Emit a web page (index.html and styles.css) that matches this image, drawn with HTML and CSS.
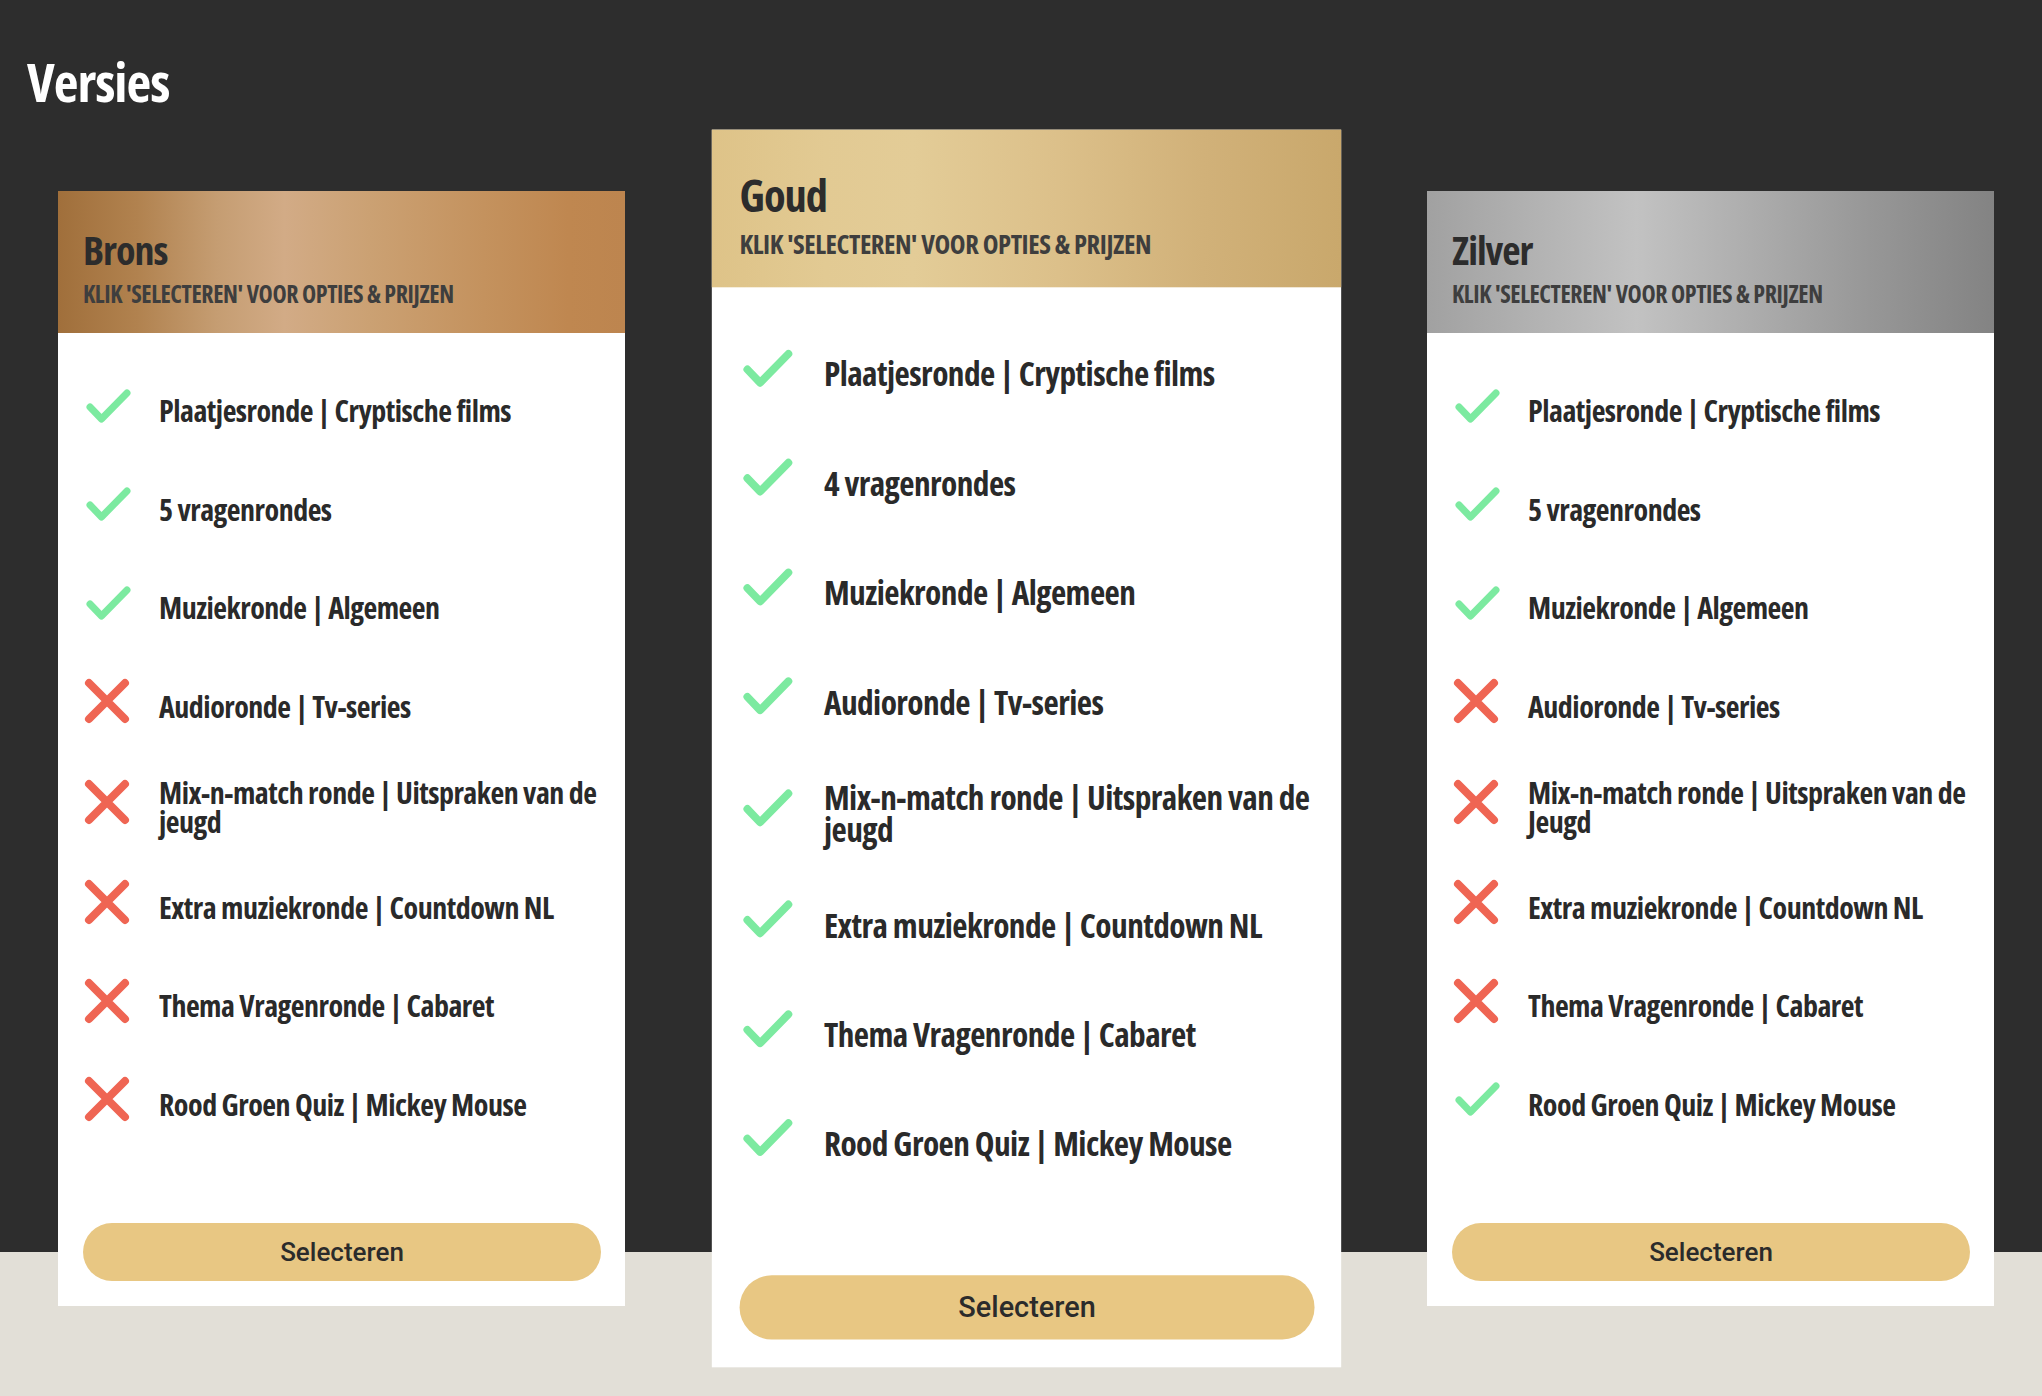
FILE: index.html
```html
<!DOCTYPE html>
<html lang="nl">
<head>
<meta charset="utf-8">
<title>Versies</title>
<link rel="stylesheet" href="styles.css">
</head>
<body>
<main class="page">
  <h1 class="page-title">Versies</h1>
  <div class="plans">
    <article class="plan plan--brons">
      <header class="plan-head">
        <h2 class="plan-name">Brons</h2>
        <p class="plan-sub">KLIK 'SELECTEREN' VOOR OPTIES &amp; PRIJZEN</p>
      </header>
      <div class="plan-body">
        <ul class="features">
          <li class="feature"><span class="feature-icon"><svg viewBox="0 0 46 44"><polyline class="ic-yes" points="5,23 16.5,35 42,9"/></svg></span><span class="feature-text">Plaatjesronde | Cryptische films</span></li>
          <li class="feature"><span class="feature-icon"><svg viewBox="0 0 46 44"><polyline class="ic-yes" points="5,23 16.5,35 42,9"/></svg></span><span class="feature-text">5 vragenrondes</span></li>
          <li class="feature"><span class="feature-icon"><svg viewBox="0 0 46 44"><polyline class="ic-yes" points="5,23 16.5,35 42,9"/></svg></span><span class="feature-text">Muziekronde | Algemeen</span></li>
          <li class="feature"><span class="feature-icon"><svg viewBox="0 0 46 44"><path class="ic-no" d="M4 4L40 40M40 4L4 40"/></svg></span><span class="feature-text">Audioronde | Tv-series</span></li>
          <li class="feature"><span class="feature-icon"><svg viewBox="0 0 46 44"><path class="ic-no" d="M4 4L40 40M40 4L4 40"/></svg></span><span class="feature-text">Mix-n-match ronde | Uitspraken van de jeugd</span></li>
          <li class="feature"><span class="feature-icon"><svg viewBox="0 0 46 44"><path class="ic-no" d="M4 4L40 40M40 4L4 40"/></svg></span><span class="feature-text">Extra muziekronde | Countdown NL</span></li>
          <li class="feature"><span class="feature-icon"><svg viewBox="0 0 46 44"><path class="ic-no" d="M4 4L40 40M40 4L4 40"/></svg></span><span class="feature-text">Thema Vragenronde | Cabaret</span></li>
          <li class="feature"><span class="feature-icon"><svg viewBox="0 0 46 44"><path class="ic-no" d="M4 4L40 40M40 4L4 40"/></svg></span><span class="feature-text">Rood Groen Quiz | Mickey Mouse</span></li>
        </ul>
        <button class="select-btn" type="button">Selecteren</button>
      </div>
    </article>

    <article class="plan plan--goud">
      <header class="plan-head">
        <h2 class="plan-name">Goud</h2>
        <p class="plan-sub">KLIK 'SELECTEREN' VOOR OPTIES &amp; PRIJZEN</p>
      </header>
      <div class="plan-body">
        <ul class="features">
          <li class="feature"><span class="feature-icon"><svg viewBox="0 0 46 44"><polyline class="ic-yes" points="5,23 16.5,35 42,9"/></svg></span><span class="feature-text">Plaatjesronde | Cryptische films</span></li>
          <li class="feature"><span class="feature-icon"><svg viewBox="0 0 46 44"><polyline class="ic-yes" points="5,23 16.5,35 42,9"/></svg></span><span class="feature-text">4 vragenrondes</span></li>
          <li class="feature"><span class="feature-icon"><svg viewBox="0 0 46 44"><polyline class="ic-yes" points="5,23 16.5,35 42,9"/></svg></span><span class="feature-text">Muziekronde | Algemeen</span></li>
          <li class="feature"><span class="feature-icon"><svg viewBox="0 0 46 44"><polyline class="ic-yes" points="5,23 16.5,35 42,9"/></svg></span><span class="feature-text">Audioronde | Tv-series</span></li>
          <li class="feature"><span class="feature-icon"><svg viewBox="0 0 46 44"><polyline class="ic-yes" points="5,23 16.5,35 42,9"/></svg></span><span class="feature-text">Mix-n-match ronde | Uitspraken van de jeugd</span></li>
          <li class="feature"><span class="feature-icon"><svg viewBox="0 0 46 44"><polyline class="ic-yes" points="5,23 16.5,35 42,9"/></svg></span><span class="feature-text">Extra muziekronde | Countdown NL</span></li>
          <li class="feature"><span class="feature-icon"><svg viewBox="0 0 46 44"><polyline class="ic-yes" points="5,23 16.5,35 42,9"/></svg></span><span class="feature-text">Thema Vragenronde | Cabaret</span></li>
          <li class="feature"><span class="feature-icon"><svg viewBox="0 0 46 44"><polyline class="ic-yes" points="5,23 16.5,35 42,9"/></svg></span><span class="feature-text">Rood Groen Quiz | Mickey Mouse</span></li>
        </ul>
        <button class="select-btn" type="button">Selecteren</button>
      </div>
    </article>

    <article class="plan plan--zilver">
      <header class="plan-head">
        <h2 class="plan-name">Zilver</h2>
        <p class="plan-sub">KLIK 'SELECTEREN' VOOR OPTIES &amp; PRIJZEN</p>
      </header>
      <div class="plan-body">
        <ul class="features">
          <li class="feature"><span class="feature-icon"><svg viewBox="0 0 46 44"><polyline class="ic-yes" points="5,23 16.5,35 42,9"/></svg></span><span class="feature-text">Plaatjesronde | Cryptische films</span></li>
          <li class="feature"><span class="feature-icon"><svg viewBox="0 0 46 44"><polyline class="ic-yes" points="5,23 16.5,35 42,9"/></svg></span><span class="feature-text">5 vragenrondes</span></li>
          <li class="feature"><span class="feature-icon"><svg viewBox="0 0 46 44"><polyline class="ic-yes" points="5,23 16.5,35 42,9"/></svg></span><span class="feature-text">Muziekronde | Algemeen</span></li>
          <li class="feature"><span class="feature-icon"><svg viewBox="0 0 46 44"><path class="ic-no" d="M4 4L40 40M40 4L4 40"/></svg></span><span class="feature-text">Audioronde | Tv-series</span></li>
          <li class="feature"><span class="feature-icon"><svg viewBox="0 0 46 44"><path class="ic-no" d="M4 4L40 40M40 4L4 40"/></svg></span><span class="feature-text">Mix-n-match ronde | Uitspraken van de Jeugd</span></li>
          <li class="feature"><span class="feature-icon"><svg viewBox="0 0 46 44"><path class="ic-no" d="M4 4L40 40M40 4L4 40"/></svg></span><span class="feature-text">Extra muziekronde | Countdown NL</span></li>
          <li class="feature"><span class="feature-icon"><svg viewBox="0 0 46 44"><path class="ic-no" d="M4 4L40 40M40 4L4 40"/></svg></span><span class="feature-text">Thema Vragenronde | Cabaret</span></li>
          <li class="feature"><span class="feature-icon"><svg viewBox="0 0 46 44"><polyline class="ic-yes" points="5,23 16.5,35 42,9"/></svg></span><span class="feature-text">Rood Groen Quiz | Mickey Mouse</span></li>
        </ul>
        <button class="select-btn" type="button">Selecteren</button>
      </div>
    </article>
  </div>
</main>
</body>
</html>
```

FILE: styles.css
```css
html, body {
  margin: 0;
  padding: 0;
}

body {
  min-height: 1396px;
  background: linear-gradient(to bottom, #2d2d2d 0, #2d2d2d 1252px, #e2dfd7 1252px, #e2dfd7 100%);
  font-family: "Open Sans", "Roboto", sans-serif;
  font-stretch: 75%;
  font-weight: 700;
  color: #2a2a2a;
}

.page {
  padding-top: 54px;
}

.page-title {
  margin: 0 0 0 27px;
  font-size: 54px;
  line-height: 54px;
  font-weight: 700;
  letter-spacing: -1px;
  color: #ffffff;
}

.plans {
  display: flex;
  align-items: flex-start;
  gap: 117.5px;
  margin-top: 83px;
  padding-left: 58px;
}

.plan {
  flex: 0 0 567px;
  width: 567px;
  background: #ffffff;
  display: flex;
  flex-direction: column;
}

.plan--goud {
  transform: scale(1.11);
}

.plan-head {
  box-sizing: border-box;
  height: 142px;
  padding: 39px 24px 0 25px;
}

.plan--brons .plan-head {
  background: linear-gradient(90deg, #a06f3b 0%, #b1824f 14%, #c59d72 28%, #d2ab86 40%, #cba173 55%, #c4925e 75%, #bf8750 90%, #bd854f 100%);
}

.plan--goud .plan-head {
  background: linear-gradient(90deg, #dec388 0%, #e2ca93 18%, #e3cc97 32%, #dcc08a 55%, #d1b179 78%, #c9a86c 100%);
}

.plan--zilver .plan-head {
  background: linear-gradient(90deg, #a1a1a1 0%, #b3b3b3 20%, #c2c2c2 37%, #acacac 58%, #979797 78%, #838383 100%);
}

.plan-name {
  margin: 0;
  font-size: 40px;
  line-height: 40px;
  font-weight: 700;
  letter-spacing: -1px;
  color: #2c2c2c;
}

.plan-sub {
  margin: 12px 0 0;
  font-size: 24px;
  line-height: 24px;
  font-weight: 700;
  letter-spacing: -0.4px;
  color: #3e3e3e;
  white-space: nowrap;
}

.plan-body {
  display: flex;
  flex-direction: column;
  padding: 50.5px 24px 25px 25px;
}

.features {
  list-style: none;
  margin: 0;
  padding: 0 0 0 2px;
  display: flex;
  flex-direction: column;
  gap: 44.5px;
}

.feature {
  display: flex;
  align-items: center;
}

.feature-icon {
  flex: 0 0 46px;
  width: 46px;
  height: 44px;
  margin-bottom: 10px;
}

.feature-icon svg {
  display: block;
  width: 46px;
  height: 44px;
  overflow: visible;
}

.ic-yes {
  fill: none;
  stroke: #7ceaa0;
  stroke-width: 7;
  stroke-linecap: round;
  stroke-linejoin: round;
}

.ic-no {
  fill: none;
  stroke: #ef6553;
  stroke-width: 8;
  stroke-linecap: round;
}

.feature-text {
  margin-left: 28px;
  font-size: 30px;
  line-height: 29px;
  letter-spacing: -0.5px;
  color: #2a2a2a;
}

.select-btn {
  margin-top: 92px;
  height: 58px;
  width: 100%;
  border: 0;
  border-radius: 29px;
  background: #e8c783;
  font-family: Roboto, "Liberation Sans", sans-serif;
  font-stretch: 100%;
  font-weight: 500;
  font-size: 26px;
  color: #2b2b2b;
  cursor: pointer;
  padding: 0;
}
```
